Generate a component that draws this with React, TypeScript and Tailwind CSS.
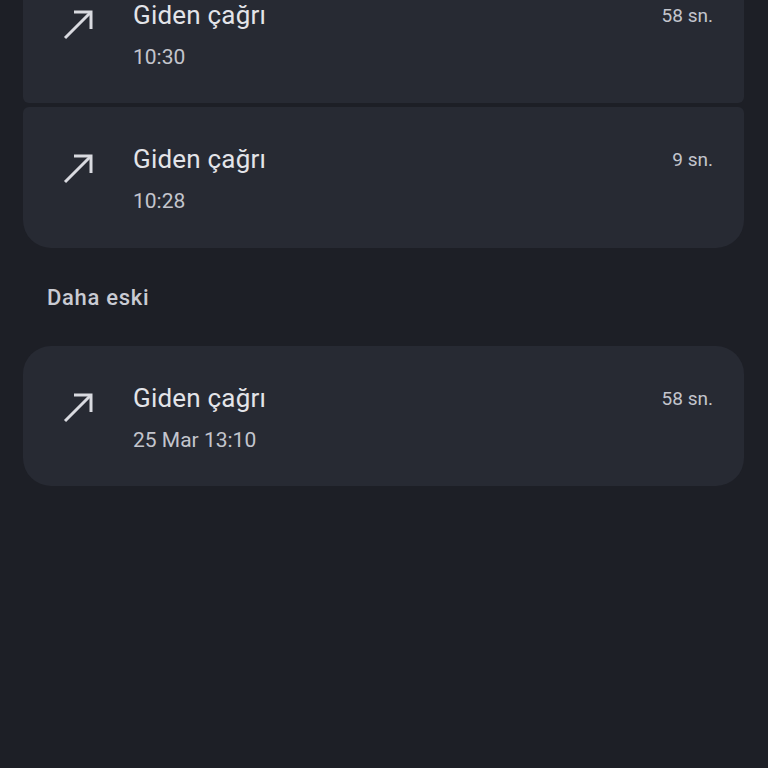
import React from "react";

const Arrow = () => (
  <svg width="32" height="32" viewBox="0 0 32 32" fill="none" className="shrink-0">
    <path d="M12 3H29V20" stroke="#d9dae0" strokeWidth="3" strokeLinejoin="miter" />
    <path d="M29 3L3 29" stroke="#d9dae0" strokeWidth="3" />
  </svg>
);

type Item = { time: string; dur: string; cls: string };

const Card = ({ time, dur, cls }: Item) => (
  <div className={`bg-[#272a33] h-[140px] flex items-start pl-[39px] pr-[31px] pt-[36px] ${cls}`}>
    <div className="mt-[10px]">
      <Arrow />
    </div>
    <div className="ml-[39px] flex-1 flex flex-col">
      <div className="text-[26px] leading-[32px] text-[#e3e4e9] tracking-[0.2px]">Giden çağrı</div>
      <div className="mt-[12px] text-[21px] leading-[28px] text-[#c3c5cd]">{time}</div>
    </div>
    <div className="text-[19px] leading-[26px] text-[#c3c5cd] mt-[4px]">{dur}</div>
  </div>
);

export default function App() {
  return (
    <div
      className="w-[768px] h-[768px] overflow-hidden bg-[#1d1f26]"
      style={{ fontFamily: "Roboto, 'Open Sans', sans-serif" }}
    >
      <div className="pl-[23px] pr-[24px] -mt-[37px] flex flex-col">
        <Card time="10:30" dur="58 sn." cls="rounded-[6px]" />
        <Card time="10:28" dur="9 sn." cls="mt-[4px] rounded-t-[6px] rounded-b-[28px] h-[141px]" />
        <div className="pl-[24px] mt-[38px] h-[24px] text-[22px] leading-[24px] text-[#c9cbd3] font-medium tracking-[0.7px]">
          Daha eski
        </div>
        <Card time="25 Mar 13:10" dur="58 sn." cls="mt-[36px] rounded-[28px]" />
      </div>
    </div>
  );
}
